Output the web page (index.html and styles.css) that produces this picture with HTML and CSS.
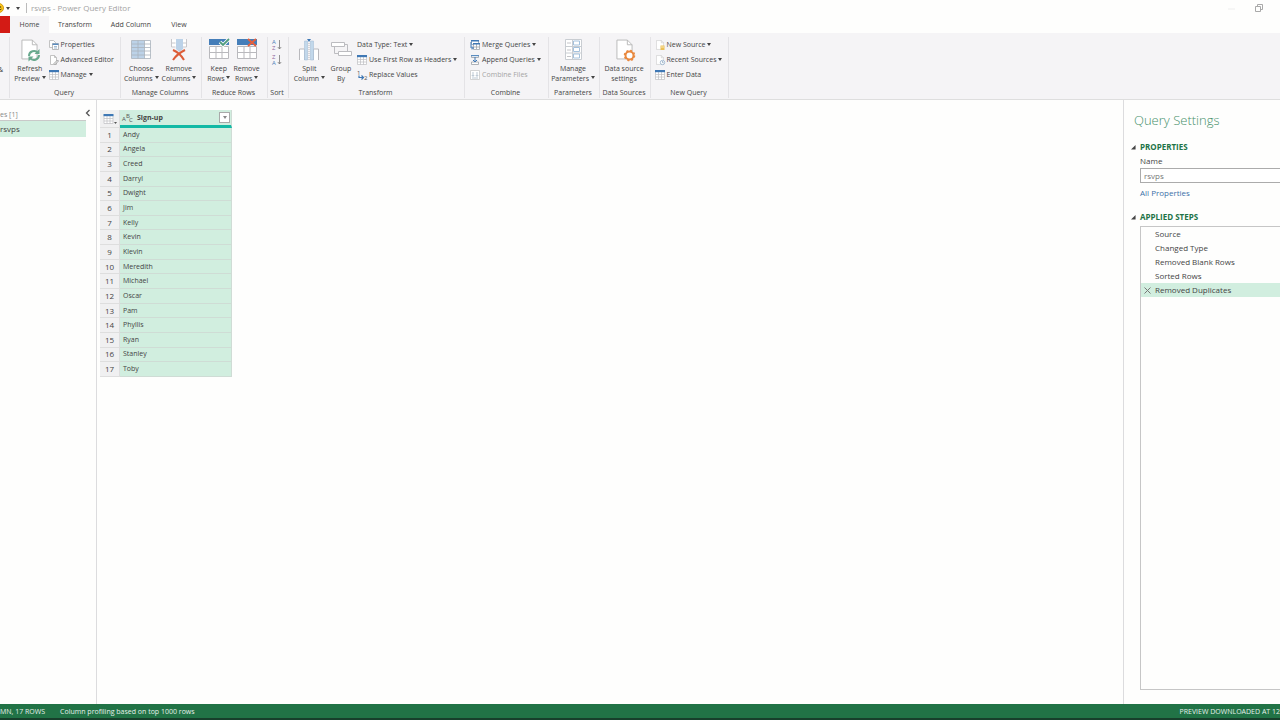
FILE: index.html
```html
<!DOCTYPE html>
<html lang="en">
<head>
    <meta charset="UTF-8">
    <meta name="viewport" content="width=device-width, initial-scale=1.0">
    <title>rsvps - Power Query Editor</title>
    <link rel="stylesheet" href="styles.css">
</head>
<body>
    <!-- Shared icons -->
    <svg class="sprite" aria-hidden="true">
        <symbol id="page" viewBox="0 0 18 22">
            <path d="M1 1h11l5 5v15H1z" fill="#fff" stroke="#b9b9b9"/>
            <path d="M12 1v5h5" fill="none" stroke="#b9b9b9"/>
        </symbol>
        <symbol id="grid" viewBox="0 0 10 10">
            <path d="M.5 1.5h9v8h-9zM.5 4.5h9M.5 7h9M3.5 2v7.500M6.500 2v7.500" fill="#fff" stroke="#bdbdc2" stroke-width=".7"/>
            <path d="M0 0h10v2.200H0z" fill="#3f78b5"/>
        </symbol>
        <symbol id="rows" viewBox="0 0 20 20">
            <path d="M.5 7.500h19v12H.5zM.5 13.500h19M7 8v11M13 8v11" fill="#fff" stroke="#b9b9bd"/>
            <path d="M0 0h20v6H0z" fill="#457eb9"/>
        </symbol>
    </svg>

    <header class="titlebar">
        <svg class="smiley" viewBox="0 0 10 10"><circle cx="5" cy="5" r="4.500" fill="#fbc81c" stroke="#d39b14"/><circle cx="6.500" cy="4" r=".8" fill="#604a10"/><path d="M3 6q2 2.500 4.500 0" fill="none" stroke="#604a10"/></svg>
        <span class="caret"></span>
        <span class="caret more"></span>
        <span class="title">rsvps - Power Query Editor</span>
        <svg class="minimize" viewBox="0 0 7 7"><path d="M0 4h7" stroke="#eeeeee"/></svg>
        <svg class="restore" viewBox="0 0 8 8"><path d="M2.500 2V.5h5v5H6M.5 2.500h5v5h-5z" fill="none" stroke="#a9a9a9"/></svg>
    </header>

    <nav class="tabs">
        <button class="file-tab" aria-label="File"></button>
        <button class="tab active">Home</button>
        <button class="tab transform-tab">Transform</button>
        <button class="tab add-tab">Add Column</button>
        <button class="tab view-tab">View</button>
    </nav>

    <div class="ribbon">
        <section class="group g-close">
            <div class="tools"><button class="big"><span>&amp;</span></button></div>
        </section>

        <section class="group g-query">
            <div class="tools">
                <button class="big">
                    <svg viewBox="0 0 22 24"><use href="#page" x="2" y="1" width="17" height="21"/><path d="M10 18a5 5 0 0 1 9-3m1 2a5 5 0 0 1-9 3" fill="none" stroke="#69a98e" stroke-width="2"/><path d="M20.500 11v5h-5zM9.500 23.500v-5h5z" fill="#69a98e"/></svg>
                    <span>Refresh<br>Preview <i class="caret"></i></span>
                </button>
                <div class="stack">
                    <button class="small"><svg viewBox="0 0 10 10"><path d="M.5 .5h4l2 2v5h-6z" fill="#fff" stroke="#b5b5b5" stroke-width=".8"/><path d="M3.500 3.500h6v6h-6z" fill="#fff" stroke="#a9a9a9" stroke-width=".8"/><path d="M3.500 3.500h6v1.500h-6z" fill="#5b8dc0"/><path d="M5 6.500h3M5 8h3" stroke="#7a9dc0" stroke-width=".7"/></svg>Properties</button>
                    <button class="small"><svg viewBox="0 0 10 10"><path d="M1.500 .5h4l2 2v7h-6z" fill="#fff" stroke="#b5b5b5" stroke-width=".8"/><path d="M5.500 .5v2h2" fill="none" stroke="#b5b5b5" stroke-width=".8"/><path d="M5 8.500l3.500-3.500 1 1-3.500 3.500z" fill="#fff" stroke="#858585" stroke-width=".8"/></svg>Advanced Editor</button>
                    <button class="small"><svg viewBox="0 0 10 10"><use href="#grid" width="10" height="10"/></svg>Manage <i class="caret"></i></button>
                </div>
            </div>
            <h2>Query</h2>
        </section>

        <section class="group g-columns">
            <div class="tools">
                <button class="big">
                    <svg viewBox="0 0 22 24"><path d="M1.500 2.500h19v18h-19z" fill="#fff"/><path d="M1.500 2.500h13v18h-13z" fill="#bcd2e8"/><path d="M1.500 2.500h19v18h-19zM1.500 6h19M1.500 9.500h19M1.500 13h19M1.500 17h19M8 2.500v18M14.500 2.500v18" fill="none" stroke="#a9b2bc" stroke-width=".8"/></svg>
                    <span>Choose<br>Columns <i class="caret"></i></span>
                </button>
                <button class="big">
                    <svg viewBox="0 0 22 24"><path d="M3 1.500h16v8H3z" fill="#fff"/><path d="M3.500 1v8h4M18.500 1v8h-4M3.500 5h4M14.500 5h4" fill="none" stroke="#c8c8cc"/><path d="M8 1h7v10l-3.500 3L8 11z" fill="#bcd2e8"/><path d="M5 12q7 3 11 10M17 12q-8 4-12 10" fill="none" stroke="#dc5c37" stroke-width="2"/></svg>
                    <span>Remove<br>Columns <i class="caret"></i></span>
                </button>
            </div>
            <h2>Manage Columns</h2>
        </section>

        <section class="group g-rows">
            <div class="tools">
                <button class="big">
                    <svg viewBox="0 0 22 24"><use href="#rows" x="1" y="1" width="20" height="20"/><path d="M12 4l3 3 6-6" fill="none" stroke="#fff" stroke-width="3.500"/><path d="M12 4l3 3 6-6" fill="none" stroke="#4f9c7d" stroke-width="1.800"/></svg>
                    <span>Keep<br>Rows <i class="caret"></i></span>
                </button>
                <button class="big">
                    <svg viewBox="0 0 22 24"><use href="#rows" x="1" y="1" width="20" height="20"/><path d="M12 1l8 7M20 1l-8 7" fill="none" stroke="#e6603d" stroke-width="1.800"/></svg>
                    <span>Remove<br>Rows <i class="caret"></i></span>
                </button>
            </div>
            <h2>Reduce Rows</h2>
        </section>

        <section class="group g-sort">
            <div class="tools">
                <div class="stack">
                    <button class="sort" aria-label="Sort ascending"><svg viewBox="0 0 10 12"><text x="0" y="5" fill="#4c7fb8">A</text><text x="0" y="11" fill="#8c659c">Z</text><path d="M7.500 1v9M5.800 8l1.700 2 1.700-2" fill="none" stroke="#777" stroke-width=".8"/></svg></button>
                    <button class="sort" aria-label="Sort descending"><svg viewBox="0 0 10 12"><text x="0" y="5" fill="#8c659c">Z</text><text x="0" y="11" fill="#4c7fb8">A</text><path d="M7.500 1v9M5.800 8l1.700 2 1.700-2" fill="none" stroke="#777" stroke-width=".8"/></svg></button>
                </div>
            </div>
            <h2>Sort</h2>
        </section>

        <section class="group g-transform">
            <div class="tools">
                <button class="big">
                    <svg viewBox="0 0 22 24"><path d="M1.500 22V11h5v11M15.500 22V11h5v11" fill="#fff" stroke="#b9b9bd"/><path d="M6.500 22V3h3v19zM12.500 22V3h3v19z" fill="#c2d8eb" stroke="#a9c1d8" stroke-width=".6"/><path d="M9 1h4l-2 3z" fill="#3f78b5"/><path d="M11 5v17" stroke="#b9b9bd" stroke-dasharray="1 1"/></svg>
                    <span>Split<br>Column <i class="caret"></i></span>
                </button>
                <button class="big">
                    <svg viewBox="0 0 22 24"><path d="M1.500 4.500h13v4h-13zM8.500 13.500h13v4h-13z" fill="#fff" stroke="#bcbcc0"/><path d="M4.500 9v6.500H8M14.500 6.500h3V13" fill="none" stroke="#bcbcc0"/></svg>
                    <span>Group<br>By</span>
                </button>
                <div class="stack">
                    <button class="small">Data Type: Text <i class="caret"></i></button>
                    <button class="small"><svg viewBox="0 0 10 10"><use href="#grid" width="10" height="10"/></svg>Use First Row as Headers <i class="caret"></i></button>
                    <button class="small"><svg viewBox="0 0 10 10"><text x="0" y="5" fill="#555">1</text><text x="7" y="10" fill="#555">2</text><path d="M2 5.500V7.500h4M4.500 5.500l2 2-2 2" fill="none" stroke="#3f78b5" stroke-width="1.200"/></svg>Replace Values</button>
                </div>
            </div>
            <h2>Transform</h2>
        </section>

        <section class="group g-combine">
            <div class="tools">
                <div class="stack">
                    <button class="small"><svg viewBox="0 0 10 10"><path d="M1.500 .5h7v4h-7z" fill="#fff" stroke="#8c9fb4" stroke-width=".8"/><path d="M3.500 3.500h6v6h-6zM6.500 4v5M3.500 7h6" fill="#fff" stroke="#a0a5ab" stroke-width=".8"/><path d="M1 0h8v1.500H1zM3 3h7v1.500H3z" fill="#3f78b5"/><path d="M1 2v6h2M2 6.500l1.500 1.500L2 9.500" fill="none" stroke="#3f78b5"/></svg>Merge Queries <i class="caret"></i></button>
                    <button class="small"><svg viewBox="0 0 10 10"><path d="M1.500 .5h7v2h-7zM1.500 7h7v2.500h-7z" fill="#fff" stroke="#9a9fa6" stroke-width=".8"/><path d="M1 0h8v1.200H1z" fill="#5b8dc0"/><path d="M5 2v5M3 5l2 2 2-2" fill="none" stroke="#3f78b5"/></svg>Append Queries <i class="caret"></i></button>
                    <button class="small" disabled><svg viewBox="0 0 10 10"><path d="M.5 .5h9v9h-9z" fill="#fff" stroke="#c9c9c9" stroke-width=".8"/><path d="M3 2v4M1.800 5L3 6.500 4.200 5M7 2v4M5.800 5L7 6.500 8.200 5M2 8h6" fill="none" stroke="#a9b9c5" stroke-width=".8"/></svg>Combine Files</button>
                </div>
            </div>
            <h2>Combine</h2>
        </section>

        <section class="group g-parameters">
            <div class="tools">
                <button class="big">
                    <svg viewBox="0 0 22 24"><path d="M3.500 1.500h16v20h-16zM10.500 1.500v20M3.500 8.500h16M3.500 15h16" fill="#fff" stroke="#c9cdd2"/><path d="M11.500 3h6v4h-6zM11.500 9.500h6v4h-6zM11.500 16h6v4h-6z" fill="#fff" stroke="#a4c1dc"/><path d="M5 5h4M5 12h4M5 18.500h4" stroke="#c5c5c9"/></svg>
                    <span>Manage<br>Parameters <i class="caret"></i></span>
                </button>
            </div>
            <h2>Parameters</h2>
        </section>

        <section class="group g-sources">
            <div class="tools">
                <button class="big">
                    <svg viewBox="0 0 22 24"><use href="#page" x="3" y="1" width="17" height="21"/><circle cx="16.500" cy="17.500" r="4" fill="#fff" stroke="#e9893f" stroke-width="2"/><circle cx="16.500" cy="17.500" r="5" fill="none" stroke="#e9893f" stroke-width="1.500" stroke-dasharray="2 1.930"/></svg>
                    <span>Data source<br>settings</span>
                </button>
            </div>
            <h2>Data Sources</h2>
        </section>

        <section class="group g-new">
            <div class="tools">
                <div class="stack">
                    <button class="small"><svg viewBox="0 0 10 10"><use href="#page" x="1" width="8" height="10"/><path d="M5.500 5.500h4v4.500h-4z" fill="#ecc056"/><path d="M6 7h3" stroke="#fff2cd" stroke-width=".8"/></svg>New Source <i class="caret"></i></button>
                    <button class="small"><svg viewBox="0 0 10 10"><use href="#page" x="1" width="8" height="10"/><circle cx="7.500" cy="7.500" r="2.200" fill="#fff" stroke="#91adc9" stroke-width=".8"/><path d="M7.500 6v1.700h1.200" fill="none" stroke="#6e8fac" stroke-width=".6"/></svg>Recent Sources <i class="caret"></i></button>
                    <button class="small"><svg viewBox="0 0 10 10"><use href="#grid" width="10" height="10"/></svg>Enter Data</button>
                </div>
            </div>
            <h2>New Query</h2>
        </section>
    </div>

    <main class="workspace">
        <aside class="queries">
            <div class="queries-head">
                <span>es [1]</span>
                <button aria-label="Collapse"><svg viewBox="0 0 6 8"><path d="M4.500 1L1.500 4l3 3" fill="none" stroke="#555" stroke-width="1.300"/></svg></button>
            </div>
            <button class="query">rsvps</button>
        </aside>

        <div class="preview">
            <table>
                <thead>
                    <tr>
                        <th class="corner"><svg viewBox="0 0 14 10"><use href="#grid" width="11" height="10"/><path d="M11 8h3l-1.500 2z" fill="#555"/></svg></th>
                        <th>
                            <div class="column-head">
                                <svg class="type" viewBox="0 0 11 9"><text x="0" y="8">A</text><text x="4" y="5">B</text><text x="7" y="9">C</text></svg>
                                <span>Sign-up</span>
                                <button aria-label="Filter"><i class="caret"></i></button>
                            </div>
                        </th>
                    </tr>
                </thead>
                <tbody>
                    <tr><td>1</td><td>Andy</td></tr>
                    <tr><td>2</td><td>Angela</td></tr>
                    <tr><td>3</td><td>Creed</td></tr>
                    <tr><td>4</td><td>Darryl</td></tr>
                    <tr><td>5</td><td>Dwight</td></tr>
                    <tr><td>6</td><td>Jim</td></tr>
                    <tr><td>7</td><td>Kelly</td></tr>
                    <tr><td>8</td><td>Kevin</td></tr>
                    <tr><td>9</td><td>Klevin</td></tr>
                    <tr><td>10</td><td>Meredith</td></tr>
                    <tr><td>11</td><td>Michael</td></tr>
                    <tr><td>12</td><td>Oscar</td></tr>
                    <tr><td>13</td><td>Pam</td></tr>
                    <tr><td>14</td><td>Phyllis</td></tr>
                    <tr><td>15</td><td>Ryan</td></tr>
                    <tr><td>16</td><td>Stanley</td></tr>
                    <tr><td>17</td><td>Toby</td></tr>
                </tbody>
            </table>
        </div>

        <aside class="settings">
            <h1>Query Settings</h1>
            <h3><svg viewBox="0 0 6 6"><path d="M5.500 0v5.500H0z" fill="#444"/></svg>PROPERTIES</h3>
            <div class="properties">
                <label for="queryName">Name</label>
                <input type="text" id="queryName" value="rsvps">
                <a href="#">All Properties</a>
            </div>
            <h3><svg viewBox="0 0 6 6"><path d="M5.500 0v5.500H0z" fill="#444"/></svg>APPLIED STEPS</h3>
            <ul class="steps">
                <li><button>Source</button></li>
                <li><button>Changed Type</button></li>
                <li><button>Removed Blank Rows</button></li>
                <li><button>Sorted Rows</button></li>
                <li class="selected"><button><svg viewBox="0 0 7 7"><path d="M.5 .5l6 6M6.500 .5l-6 6" stroke="#777"/></svg>Removed Duplicates</button></li>
            </ul>
        </aside>
    </main>

    <footer class="status">
        <span>MN, 17 ROWS</span>
        <span>Column profiling based on top 1000 rows</span>
        <span class="downloaded">PREVIEW DOWNLOADED AT 12</span>
    </footer>
</body>
</html>
```
FILE: styles.css
```css
* {
    box-sizing: border-box;
}

body {
    margin: 0;
    height: 100vh;
    display: flex;
    flex-direction: column;
    overflow: hidden;
    background-color: #fefefd;
    color: #444;
    font-family: "Open Sans", "Noto Sans", sans-serif;
    font-size: 7px;
    line-height: 10px;
}

button {
    padding: 0;
    border: none;
    background: none;
    color: inherit;
    font: inherit;
    white-space: nowrap;
}

h1, h2, h3, ul {
    margin: 0;
    padding: 0;
    font-weight: normal;
}

svg {
    display: block;
    flex: none;
    overflow: visible;
}

svg text {
    font-size: 6px;
}

.sprite {
    display: none;
}

.caret {
    display: inline-block;
    flex: none;
    vertical-align: 2px;
    border: 2px solid transparent;
    border-top: 3px solid #444;
    border-bottom: none;
}

/* Title bar */
.titlebar {
    height: 16px;
    flex: none;
    display: flex;
    align-items: center;
    color: #a3a3a3;
    font-size: 8px;
}

.smiley {
    width: 10px;
    height: 10px;
    margin-left: -6px;
}

.titlebar .caret {
    margin-left: 2px;
}

.titlebar .more {
    margin-left: 6px;
}

.title {
    margin: 0 auto 0 6px;
    padding-left: 4px;
    border-left: 1px solid #bbb;
}

.minimize {
    width: 7px;
    height: 7px;
}

.restore {
    width: 8px;
    height: 8px;
    margin: 0 17px 0 20px;
}

/* Tabs */
.tabs {
    height: 17px;
    flex: none;
    display: flex;
}

.file-tab {
    width: 10px;
    background-color: #d31b15;
}

.tab.active {
    width: 39px;
    background-color: #f5f4f6;
}

.transform-tab {
    width: 52px;
}

.add-tab {
    width: 60px;
}

.view-tab {
    width: 36px;
}

/* Ribbon */
.ribbon {
    flex: none;
    display: flex;
    background-color: #f5f4f6;
    border-bottom: 1px solid #dedede;
    padding: 4px 0 1px;
}

.group {
    display: flex;
    flex: none;
    flex-direction: column;
    height: 61px;
    border-right: 1px solid #e4e3e6;
}

.group h2 {
    padding-right: 2px;
    text-align: center;
    font-size: 7px;
}

.tools {
    flex: 1;
    display: flex;
    justify-content: center;
    padding-right: 2px;
    white-space: nowrap;
}

.big {
    display: flex;
    flex-direction: column;
    align-items: center;
    padding-top: 1px;
}

.big svg {
    width: 22px;
    height: 24px;
    margin-bottom: 2px;
}

.stack {
    display: flex;
    flex-direction: column;
}

.small {
    height: 15px;
    display: flex;
    align-items: center;
    gap: 2px;
}

.small svg {
    width: 10px;
    height: 10px;
}

.small:disabled {
    color: #a5a5a5;
}

.sort {
    height: 15px;
}

.sort svg {
    width: 10px;
    height: 12px;
}

.g-close {
    width: 10px;
    overflow: hidden;
}

.g-close .tools {
    justify-content: flex-end;
    padding: 27px 6px 0 0;
}

.g-query {
    width: 111px;
}

.g-query .tools,
.g-columns .tools,
.g-rows .tools {
    gap: 3px;
}

.g-columns {
    width: 81px;
}

.g-rows {
    width: 66px;
}

.g-sort {
    width: 21px;
}

.g-transform {
    width: 176px;
}

.g-transform .tools {
    gap: 5px;
}

.g-combine {
    width: 84px;
}

.g-parameters,
.g-sources {
    width: 51px;
}

.g-new {
    width: 78px;
}

/* Workspace */
.workspace {
    flex: 1;
    min-height: 0;
    display: flex;
}

.queries {
    width: 97px;
    flex: none;
    border-right: 1px solid #dcdcde;
    padding-top: 8px;
}

.queries-head {
    display: flex;
    align-items: flex-end;
    justify-content: space-between;
    height: 13px;
    padding-right: 5px;
    color: #888;
    background: linear-gradient(#c9c9c9, #c9c9c9) 0 12px / 86px 1px no-repeat;
    line-height: 12px;
}

.queries-head svg {
    width: 6px;
    height: 8px;
    margin-bottom: 4px;
}

.query {
    display: block;
    width: 86px;
    height: 16px;
    background-color: #d1eedf;
    text-align: left;
    font-size: 8px;
}

.preview {
    flex: 1;
    padding: 10px 3px;
}

table {
    height: 267px;
    border-spacing: 0;
}

th, td {
    padding: 0;
    background-color: #d1eedf;
    border: solid #cfdcd5;
    border-width: 0 1px 1px 0;
    text-align: left;
}

th {
    height: 18px;
}

th + th {
    width: 112px;
    border-bottom: 3px solid #13b9a5;
}

td {
    padding-left: 3px;
    line-height: 12px;
}

th:first-child,
td:first-child {
    width: 20px;
    padding: 0;
    background-color: #f0f0f1;
    border-color: #dedede;
    text-align: center;
}

td:first-child {
    font-size: 8px;
}

.corner svg {
    width: 14px;
    height: 10px;
    margin: auto;
}

.column-head {
    display: flex;
    align-items: center;
    gap: 4px;
    padding: 0 1px 0 2px;
}

.column-head .type {
    width: 11px;
    height: 9px;
    fill: #555;
    font-weight: normal;
}

.column-head button {
    width: 11px;
    height: 11px;
    display: flex;
    align-items: center;
    justify-content: center;
    margin-left: auto;
    border: 1px solid #a9a9a9;
    background-color: #fff;
}

.column-head .caret {
    border-top-color: #888;
}

/* Query settings */
.settings {
    width: 157px;
    flex: none;
    display: flex;
    flex-direction: column;
    border-left: 1px solid #dcdcde;
    padding: 10px 0 14px 7px;
    font-size: 8px;
}

.settings h1 {
    padding-left: 3px;
    color: #46906a;
    font-size: 13px;
    font-weight: 300;
    line-height: 20px;
}

.settings h3 {
    display: flex;
    align-items: center;
    gap: 4px;
    margin-top: 12px;
    color: #217346;
    font-size: 8px;
    font-weight: bold;
}

.settings h3 svg {
    width: 5px;
    height: 5px;
}

.properties {
    display: flex;
    flex-direction: column;
    padding: 4px 0 2px 9px;
}

.properties input {
    height: 15px;
    margin: 2px 0 5px;
    padding: 0 3px;
    border: 1px solid #ababab;
    border-right: none;
    background-color: #fff;
    color: #777;
    font: inherit;
}

.properties a {
    color: #3c70a8;
    text-decoration: none;
}

.steps {
    flex: 1;
    margin: 4px 0 0 9px;
    border: 1px solid #c6c6c6;
    border-right: none;
    list-style: none;
}

.steps button {
    width: 100%;
    height: 14px;
    display: flex;
    align-items: center;
    gap: 4px;
    padding-left: 14px;
}

.steps .selected button {
    padding-left: 3px;
    background-color: #d1eedf;
}

.steps svg {
    width: 7px;
    height: 7px;
}

/* Status bar */
.status {
    height: 16px;
    flex: none;
    display: flex;
    align-items: center;
    gap: 15px;
    padding-top: 1px;
    background-color: #217346;
    border-bottom: 2px solid #173f2b;
    color: #e6f1eb;
    line-height: 12px;
    white-space: nowrap;
}

.downloaded {
    margin-left: auto;
}
```
